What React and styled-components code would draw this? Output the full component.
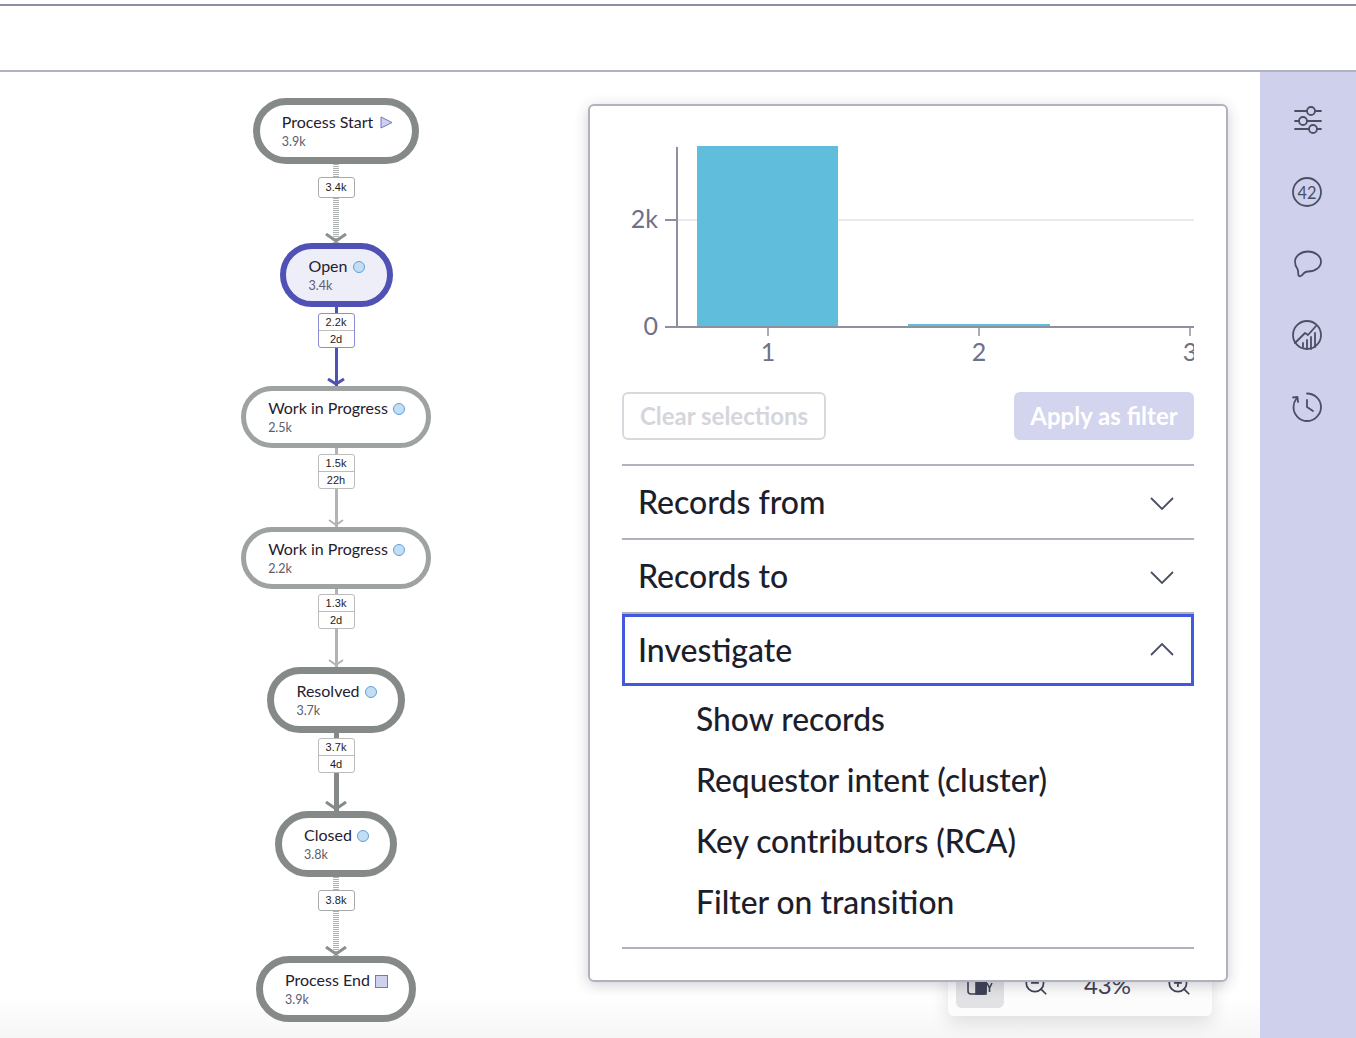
import React from "react";
import styled, { createGlobalStyle } from "styled-components";
import { ZoomIn, ZoomOut } from "lucide-react";

const Global = createGlobalStyle`
  html, body {
    margin: 0;
    padding: 0;
    background: #fff;
    font-family: "Lato", "Liberation Sans", sans-serif;
  }
  * { box-sizing: border-box; }
`;

const tones = {
  heavy: { border: "#858a88", width: 7, pad: 21, bg: "#fff" },
  light: { border: "#9ea3a2", width: 5, pad: 21, bg: "#fff" },
  active: { border: "#4f51b4", width: 6, pad: 22, bg: "#eeeef8" },
};

const steps = [
  { name: "Process Start", count: "3.9k", tone: "heavy", h: 66, marker: "start" },
  { edge: { h: 79, top: 13, kind: "dotted", labels: ["3.4k"] } },
  { name: "Open", count: "3.4k", tone: "active", h: 64 },
  { edge: { h: 79, top: 6, kind: "active", labels: ["2.2k", "2d"] } },
  { name: "Work in Progress", count: "2.5k", tone: "light", h: 62 },
  { edge: { h: 79, top: 6, kind: "light", labels: ["1.5k", "22h"] } },
  { name: "Work in Progress", count: "2.2k", tone: "light", h: 62 },
  { edge: { h: 78, top: 5, kind: "light", labels: ["1.3k", "2d"] } },
  { name: "Resolved", count: "3.7k", tone: "heavy", h: 66 },
  { edge: { h: 78, top: 5, kind: "heavy", labels: ["3.7k", "4d"] } },
  { name: "Closed", count: "3.8k", tone: "heavy", h: 66 },
  { edge: { h: 79, top: 13, kind: "dotted", labels: ["3.8k"] } },
  { name: "Process End", count: "3.9k", tone: "heavy", h: 66, marker: "end" },
];

const edgeStyles = {
  dotted: { w: 6, color: "#aeb2b2", head: "#8a8f8f", headW: 22, headH: 10, headS: 3, label: "#a9abab" },
  active: { w: 3, color: "#4f51b4", head: "#4f51b4", headW: 18, headH: 8, headS: 3, label: "#8b8cd4" },
  light: { w: 3, color: "#b0b4b4", head: "#b0b4b4", headW: 16, headH: 8, headS: 2, label: "#bcbcbc" },
  heavy: { w: 5, color: "#858a88", head: "#858a88", headW: 22, headH: 10, headS: 3, label: "#bcbcbc" },
};

const Page = styled.div`
  width: 1356px;
  height: 1038px;
  overflow: hidden;
  display: flex;
  flex-direction: column;
  padding-top: 4px;
`;

const TopBar = styled.header`
  height: 68px;
  flex: none;
  border-top: 2px solid #8e909f;
  border-bottom: 2px solid #b0b2c0;
`;

const Body = styled.div`
  flex: 1;
  display: flex;
  min-height: 0;
`;

const Canvas = styled.main`
  flex: 1;
  position: relative;
  display: flex;
  align-items: flex-start;
  padding: 26px 0 0 242px;
  background: linear-gradient(to bottom, #fff 0, #fff 925px, #f6f6f6 966px);
`;

const Flow = styled.div`
  width: 188px;
  flex: none;
  display: flex;
  flex-direction: column;
  align-items: center;
`;

const Node = styled.div`
  flex: none;
  height: ${(p) => p.$h}px;
  display: inline-flex;
  flex-direction: column;
  justify-content: center;
  gap: 2px;
  padding: 0 ${(p) => tones[p.$tone].pad}px 0 ${(p) => tones[p.$tone].pad + 1}px;
  border: ${(p) => tones[p.$tone].width}px solid ${(p) => tones[p.$tone].border};
  border-radius: 40px;
  background: ${(p) => tones[p.$tone].bg};
`;

const NodeName = styled.div`
  display: flex;
  align-items: center;
  gap: 5px;
  font-size: 16px;
  line-height: 20px;
  color: #1f2130;
  white-space: nowrap;
`;

const NodeCount = styled.div`
  font-size: 12.5px;
  line-height: 16px;
  color: #5a5d70;
`;

const Dot = styled.span`
  width: 12px;
  height: 12px;
  margin-top: 2px;
  border-radius: 50%;
  background: #c3def2;
  border: 1px solid #5c9fe0;
`;

const Square = styled.span`
  width: 13px;
  height: 13px;
  margin-top: 2px;
  background: #cfd0eb;
  border: 1px solid #7375c6;
`;

const StartMark = styled.svg`
  margin: 1px -2px 0 2px;
`;

const Edge = styled.div`
  position: relative;
  flex: none;
  height: ${(p) => p.$h}px;
  display: flex;
  flex-direction: column;
  align-items: center;
`;

const Stem = styled.div`
  flex: ${(p) => (p.$top ? "none" : 1)};
  height: ${(p) => (p.$top ? `${p.$top}px` : "auto")};
  width: ${(p) => edgeStyles[p.$kind].w}px;
  background: ${(p) =>
    p.$kind === "dotted"
      ? "repeating-linear-gradient(to bottom, #aeb2b2 0, #aeb2b2 1px, #fff 1px, #fff 2px)"
      : edgeStyles[p.$kind].color};
`;

const EdgeLabel = styled.div`
  flex: none;
  width: 37px;
  background: #fff;
  border: 1px solid ${(p) => edgeStyles[p.$kind].label};
  border-radius: 3px;
  font-family: "Liberation Sans", sans-serif;
  font-size: 11px;
  color: #1c1c1c;
  text-align: center;
`;

const EdgeLine = styled.div`
  line-height: ${(p) => (p.$single ? 19 : 16)}px;
  & + & {
    border-top: 1px solid ${(p) => edgeStyles[p.$kind].label};
  }
`;

const ArrowHead = styled.svg`
  position: absolute;
  left: 50%;
  bottom: 0;
  transform: translateX(-50%);
  display: block;
`;

const Panel = styled.section`
  position: relative;
  z-index: 2;
  flex: none;
  width: 640px;
  height: 878px;
  margin: 6px 0 0 158px;
  padding: 24px 32px 0;
  background: #fff;
  border: 2px solid #b0b2c0;
  border-radius: 6px;
  box-shadow: 0 3px 14px rgba(40, 42, 60, 0.22);
`;

const Chart = styled.svg`
  display: block;
  overflow: hidden;
  font-family: "Lato", sans-serif;
  font-size: 25px;
  fill: #6e7286;
`;

const ButtonRow = styled.div`
  display: flex;
  justify-content: space-between;
  margin-bottom: 24px;
`;

const ClearButton = styled.button`
  width: 204px;
  height: 48px;
  padding: 0 0 2px;
  background: #fff;
  border: 2px solid #d8d9df;
  border-radius: 6px;
  font: 700 24px "Lato", sans-serif;
  color: #d5d6dc;
`;

const ApplyButton = styled.button`
  width: 180px;
  height: 48px;
  padding: 0 0 2px;
  background: #d3d4ee;
  border: 0;
  border-radius: 6px;
  font: 700 24px "Lato", sans-serif;
  color: #fff;
`;

const Section = styled.div`
  border-top: 2px solid #b0b2c0;
`;

const SectionHead = styled.div`
  height: 72px;
  display: flex;
  align-items: center;
  justify-content: space-between;
  padding: 0 ${(p) => (p.$focused ? 16 : 19)}px 2px ${(p) => (p.$focused ? 13 : 16)}px;
  border: ${(p) => (p.$focused ? "3px solid #4259dd" : "0")};
  font-size: 32px;
  font-weight: 500;
  color: #1c1e2c;
`;

const Items = styled.ul`
  list-style: none;
  margin: 0;
  padding: 3px 0 14px 74px;
`;

const Item = styled.li`
  height: 61px;
  line-height: 61px;
  font-size: 31.8px;
  font-weight: 500;
  color: #1c1e2c;
`;

const PanelEnd = styled.div`
  border-top: 2px solid #b0b2c0;
`;

const ChevronMark = styled.svg`
  margin-top: ${(p) => (p.$up ? 0 : 6)}px;
`;

const ZoomBar = styled.div`
  position: absolute;
  right: 48px;
  bottom: 22px;
  width: 264px;
  height: 64px;
  display: grid;
  grid-template-columns: 48px 26px 1fr 26px;
  column-gap: 19px;
  align-items: center;
  padding: 8px 20px 8px 8px;
  background: #fcfcfc;
  border-radius: 6px;
  box-shadow: 0 6px 18px rgba(40, 42, 60, 0.14);
  color: #3f4256;
`;

const ZoomMode = styled.div`
  height: 48px;
  display: flex;
  align-items: center;
  justify-content: center;
  background: #e2e2e4;
  border-radius: 6px;
`;

const ZoomValue = styled.span`
  text-align: center;
  font-size: 24px;
`;

const Sidebar = styled.aside`
  width: 96px;
  flex: none;
  display: flex;
  flex-direction: column;
  align-items: center;
  gap: 41.75px;
  padding: 33px 2px 0 0;
  background: #cfd0eb;
`;

const Icon = styled.svg`
  display: block;
  width: 30px;
  height: 30px;
  fill: none;
  stroke: #4b4f63;
  stroke-width: 1.8;
  stroke-linecap: round;
  stroke-linejoin: round;
`;

const IconText = styled.text`
  font-family: "Lato", sans-serif;
  font-size: 18px;
  fill: #4b4f63;
  stroke: none;
`;

const Chevron = ({ up }) => (
  <ChevronMark $up={up} width="26" height="14" viewBox="0 0 26 14" fill="none" stroke="#4b4f63" strokeWidth="1.8">
    <polyline points={up ? "2,13 13,2 24,13" : "2,1 13,12 24,1"} />
  </ChevronMark>
);

const Marker = ({ type }) => {
  if (type === "start")
    return (
      <StartMark width="13" height="13" viewBox="0 0 13 13">
        <path d="M1 1 L12 6.5 L1 12 Z" fill="#cfd0eb" stroke="#7375c6" />
      </StartMark>
    );
  if (type === "end") return <Square />;
  return <Dot />;
};

const FlowEdge = ({ h, top, kind, labels }) => {
  const s = edgeStyles[kind];
  return (
    <Edge $h={h}>
      <Stem $kind={kind} $top={top} />
      <EdgeLabel $kind={kind}>
        {labels.map((l) => (
          <EdgeLine key={l} $kind={kind} $single={labels.length === 1}>
            {l}
          </EdgeLine>
        ))}
      </EdgeLabel>
      <Stem $kind={kind} />
      <ArrowHead width={s.headW} height={s.headH} viewBox={`0 0 ${s.headW} ${s.headH}`} fill="none">
        <polyline
          points={`1,1 ${s.headW / 2},${s.headH - 2} ${s.headW - 1},1`}
          stroke={s.head}
          strokeWidth={s.headS}
        />
      </ArrowHead>
    </Edge>
  );
};

const BarChart = () => (
  <Chart width="572" height="262" viewBox="0 0 572 262">
    <line x1="55" y1="90" x2="572" y2="90" stroke="#e9e9ef" strokeWidth="2" />
    <rect x="75" y="16" width="141" height="181" fill="#60bddc" />
    <rect x="286" y="194" width="142" height="3" fill="#60bddc" />
    <g stroke="#8e909f" strokeWidth="2">
      <line x1="55" y1="17" x2="55" y2="198" />
      <line x1="43" y1="197" x2="572" y2="197" />
      <line x1="43" y1="90" x2="55" y2="90" />
    </g>
    <g stroke="#8e909f" strokeWidth="1.5">
      <line x1="146" y1="197" x2="146" y2="206" />
      <line x1="357" y1="197" x2="357" y2="206" />
      <line x1="568" y1="197" x2="568" y2="206" />
    </g>
    <text x="36" y="98" textAnchor="end">2k</text>
    <text x="36" y="205" textAnchor="end">0</text>
    <text x="146" y="231" textAnchor="middle">1</text>
    <text x="357" y="231" textAnchor="middle">2</text>
    <text x="568" y="231" textAnchor="middle">3</text>
  </Chart>
);

const SidebarIcons = () => (
  <>
    <Icon viewBox="0 0 30 30">
      <path d="M3 6 H15 M23 6 H29 M3 16 H7 M15 16 H29 M3 24 H17 M25 24 H29" />
      <circle cx="19" cy="6" r="4" />
      <circle cx="11" cy="16" r="4" />
      <circle cx="21" cy="24" r="4" />
    </Icon>
    <Icon viewBox="0 0 30 30">
      <circle cx="15" cy="15" r="14" />
      <IconText x="15" y="21.5" textAnchor="middle" textLength="19" lengthAdjust="spacingAndGlyphs">
        42
      </IconText>
    </Icon>
    <Icon viewBox="0 0 30 30">
      <path d="M3 12.5 C3 7 9 2.5 16 2.5 C23 2.5 29 7 29 12.5 C29 18.5 23 22.5 16 22.5 C14.5 22.5 13 23 11.5 24.5 C10 27 7.5 28 6.5 26.5 C6 25 6.5 22 5.5 20 C3.8 18 3 15.5 3 12.5 Z" />
    </Icon>
    <Icon viewBox="0 0 30 30">
      <circle cx="15" cy="15" r="14" />
      <path d="M3 23 L13 13 L16 15 L24 6" />
      <path d="M11 27 V23 M15 29 V20 M19 29 V17 M23 27 V13" />
    </Icon>
    <Icon viewBox="0 0 30 30">
      <path d="M15 1.5 C22.5 1.5 29 7.5 29 15 C29 22.5 22.5 29 15 29 C7.5 29 1.5 22.5 1.5 15 C1.5 11.5 2.5 9 4.5 6.5" />
      <path d="M1 5.5 L5.5 5 L6 10" />
      <path d="M15 8 V15 L21 19" />
    </Icon>
  </>
);

export default function App() {
  return (
    <Page>
      <Global />
      <TopBar />
      <Body>
        <Canvas>
          <Flow>
            {steps.map((step, i) =>
              step.edge ? (
                <FlowEdge key={i} {...step.edge} />
              ) : (
                <Node key={i} $tone={step.tone} $h={step.h}>
                  <NodeName>
                    {step.name}
                    <Marker type={step.marker} />
                  </NodeName>
                  <NodeCount>{step.count}</NodeCount>
                </Node>
              )
            )}
          </Flow>
          <Panel>
            <BarChart />
            <ButtonRow>
              <ClearButton>Clear selections</ClearButton>
              <ApplyButton>Apply as filter</ApplyButton>
            </ButtonRow>
            <Section>
              <SectionHead>
                Records from
                <Chevron />
              </SectionHead>
            </Section>
            <Section>
              <SectionHead>
                Records to
                <Chevron />
              </SectionHead>
            </Section>
            <Section>
              <SectionHead $focused>
                Investigate
                <Chevron up />
              </SectionHead>
              <Items>
                <Item>Show records</Item>
                <Item>Requestor intent (cluster)</Item>
                <Item>Key contributors (RCA)</Item>
                <Item>Filter on transition</Item>
              </Items>
            </Section>
            <PanelEnd />
          </Panel>
          <ZoomBar>
            <ZoomMode>
              <svg width="26" height="26" viewBox="0 0 26 26" fill="none" stroke="#3f4256" strokeWidth="1.6">
                <rect x="1" y="2" width="18" height="21" rx="3" />
                <rect x="9" y="2" width="10" height="21" fill="#3f4256" />
                <path d="M20 12 L22.5 17 L25 12 M22.5 17 V21" />
              </svg>
            </ZoomMode>
            <ZoomOut size={26} strokeWidth={1.6} />
            <ZoomValue>43%</ZoomValue>
            <ZoomIn size={26} strokeWidth={1.6} />
          </ZoomBar>
        </Canvas>
        <Sidebar>
          <SidebarIcons />
        </Sidebar>
      </Body>
    </Page>
  );
}
